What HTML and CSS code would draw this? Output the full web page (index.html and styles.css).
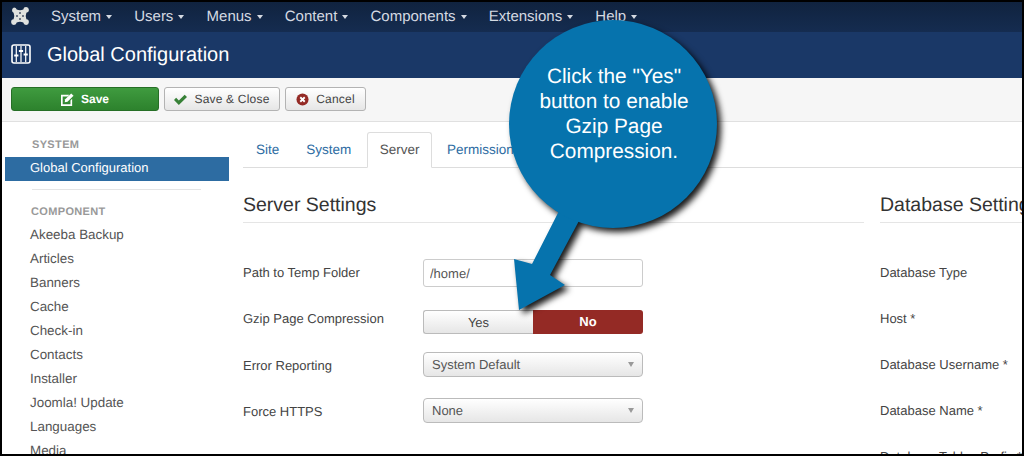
FILE: index.html
```html
<!DOCTYPE html>
<html lang="en">
<head>
<meta charset="utf-8">
<title>Global Configuration</title>
<link rel="stylesheet" href="styles.css">
</head>
<body>
<div class="frame">
  <nav class="navbar">
    <svg class="logo" viewBox="0 0 18 18"><path d="M3 .5a2.800 2.800 0 0 1 2.700 2.100Q9 4 12.300 2.600A2.800 2.800 0 1 1 15.400 5.700Q14 9 15.400 12.300A2.800 2.800 0 1 1 12.300 15.400Q9 14 5.700 15.400A2.800 2.800 0 1 1 2.600 12.300Q4 9 2.600 5.700A2.800 2.800 0 0 1 3 .5z" fill="#dfe1de"/><g fill="#4a5568"><circle cx="9" cy="6" r="1"/><circle cx="6" cy="9" r="1"/><circle cx="12" cy="9" r="1"/><circle cx="9" cy="12" r="1"/></g></svg>
    <ul class="menu">
      <li>System<i class="caret"></i></li>
      <li>Users<i class="caret"></i></li>
      <li>Menus<i class="caret"></i></li>
      <li>Content<i class="caret"></i></li>
      <li>Components<i class="caret"></i></li>
      <li>Extensions<i class="caret"></i></li>
      <li>Help<i class="caret"></i></li>
    </ul>
  </nav>
  <header class="titlebar">
    <svg class="title-icon" viewBox="0 0 20 20"><rect x="1" y="1" width="18" height="18" rx="2" fill="none" stroke="#fff" stroke-width="1.600"/><path d="M5.300 2v16M10 2v16M14.700 2v16" stroke="#fff" stroke-width="1.200"/><path d="M3.200 11.500h4.200M7.900 7h4.200M12.600 10.500h4.200" stroke="#fff" stroke-width="2.200"/></svg>
    <h1>Global Configuration</h1>
  </header>
  <div class="toolbar">
    <button class="btn btn-save"><svg viewBox="0 0 14 14"><path d="M0 2h9L7.200 3.800H1.800v8.400h8.400V8L12 6.200V14H0z" fill="#fff"/><path d="M4.500 6.800L11 .5 13.500 3 7 9.500l-3 .5z" fill="#fff"/></svg>Save</button>
    <button class="btn btn-close"><svg viewBox="0 0 14 14"><path d="M0 7.500l2.300-2.300 2.900 2.900L11.500 1.800 14 4.200 5.200 13z" fill="#378137"/></svg>Save &amp; Close</button>
    <button class="btn btn-cancel"><svg viewBox="0 0 14 14"><circle cx="7" cy="7" r="6.500" fill="#942a25"/><path d="M4.600 4.600l4.800 4.800M9.400 4.600l-4.800 4.800" stroke="#fff" stroke-width="2"/></svg>Cancel</button>
  </div>
  <div class="main">
    <aside class="sidebar">
      <div class="nav-head nav-head-first">SYSTEM</div>
      <div class="nav-active">Global Configuration</div>
      <div class="divider"></div>
      <div class="nav-head">COMPONENT</div>
      <a class="nav-item">Akeeba Backup</a>
      <a class="nav-item">Articles</a>
      <a class="nav-item">Banners</a>
      <a class="nav-item">Cache</a>
      <a class="nav-item">Check-in</a>
      <a class="nav-item">Contacts</a>
      <a class="nav-item">Installer</a>
      <a class="nav-item">Joomla! Update</a>
      <a class="nav-item">Languages</a>
      <a class="nav-item">Media</a>
    </aside>
    <section class="content">
      <div class="tabs">
        <a class="tab tab-site">Site</a>
        <a class="tab">System</a>
        <a class="tab tab-active">Server</a>
        <a class="tab">Permissions</a>
      </div>
      <div class="columns">
        <div class="col col-left">
          <h2>Server Settings</h2>
          <div class="row row-input"><label>Path to Temp Folder</label><input class="input" value="/home/"></div>
          <div class="row row-toggle"><label>Gzip Page Compression</label>
            <div class="toggle"><span class="yes">Yes</span><span class="no">No</span></div></div>
          <div class="row row-select"><label>Error Reporting</label><div class="select">System Default<i class="arrow"></i></div></div>
          <div class="row row-select"><label>Force HTTPS</label><div class="select">None<i class="arrow"></i></div></div>
        </div>
        <div class="col col-right">
          <h2>Database Settings</h2>
          <div class="row row-input"><label>Database Type</label></div>
          <div class="row row-toggle"><label>Host *</label></div>
          <div class="row row-select"><label>Database Username *</label></div>
          <div class="row row-select"><label>Database Name *</label></div>
          <div class="row row-select"><label>Database Tables Prefix *</label></div>
        </div>
      </div>
    </section>
  </div>
  <div class="callout">
    <svg class="callout-shape" viewBox="0 0 240 320"><path d="M52 190L24 245L6 240L11 291L57 266L42 256L72 200z" fill="#0673ad"/><circle cx="105" cy="105" r="104" fill="#0673ad"/></svg>
    <p>Click the "Yes" button to enable Gzip Page Compression.</p>
  </div>
</div>
</body>
</html>
```
FILE: styles.css
```css
* { box-sizing: border-box; }
html, body { margin: 0; height: 456px; overflow: hidden; background: #000; }
body { font-family: "Liberation Sans", Arial, sans-serif; color: #444; text-rendering: geometricPrecision; }
.frame { position: relative; width: 1024px; height: 456px; border: 2px solid #000; background: #fff; overflow: hidden; }
.navbar { display: flex; align-items: center; height: 30px; padding: 0 0 2px 9px; background: linear-gradient(#10233f, #152c50); }
.logo { width: 18px; height: 18px; flex: none; margin-top: -1px; }
.menu { display: flex; list-style: none; margin: 0 0 0 22px; padding: 0; color: #d5dae2; font-size: 15px; }
.menu li { margin-right: 22.200px; display: flex; align-items: center; }
.caret { width: 0; height: 0; margin: 2px 0 0 5px; border: 3.500px solid transparent; border-top: 4px solid #d5dae2; border-bottom: 0; }
.titlebar { display: flex; align-items: center; height: 46px; padding-left: 9px; background: #1a3867; color: #fff; }
.title-icon { width: 20px; height: 20px; margin-top: -2px; flex: none; }
h1 { margin: 0 0 0 16px; font-size: 20px; font-weight: 400; }
.toolbar { display: flex; gap: 5px; height: 44px; padding: 9px; background: #f6f6f6; border-bottom: 1px solid #e0e0e0; }
.btn { display: flex; align-items: center; justify-content: center; height: 24px; padding: 0; font: 12px "Liberation Sans", Arial, sans-serif; letter-spacing: .2px; border-radius: 3px; color: #444; border: 1px solid #b3b3b3; background: linear-gradient(#fff, #e6e6e6); text-rendering: geometricPrecision; }
.btn svg { width: 13px; height: 13px; margin-right: 7px; flex: none; }
.btn-save { width: 148px; background: linear-gradient(#3f9b3f, #2d822d); border-color: #266f26; color: #fff; font-weight: 700; letter-spacing: 0; }
.btn-close { width: 116px; }
.btn-cancel { width: 81px; }
.main { display: flex; height: 332px; overflow: hidden; }
.sidebar { flex: none; width: 227px; padding: 3px 0 0 3px; font-size: 13px; color: #555; }
.nav-head { height: 26px; padding-left: 26px; font-size: 11px; line-height: 26px; font-weight: 700; color: #999; letter-spacing: .35px; }
.nav-head-first { height: 32px; padding-left: 27px; line-height: 40px; }
.nav-active { width: 224px; height: 24px; margin-bottom: 8px; padding-left: 25px; background: #2d6ca2; color: #fff; line-height: 22px; font-size: 13px; }
.divider { width: 169px; height: 1px; margin: 0 0 9px 27px; background: #e5e5e5; }
.nav-item { display: block; height: 24px; padding-left: 25px; line-height: 20px; font-size: 13.400px; }
.content { flex: none; width: 793px; padding: 10px 0 0 14px; overflow: hidden; }
.tabs { display: flex; height: 36px; border-bottom: 1px solid #ddd; font-size: 13.500px; color: #2d6ca2; }
.tab { height: 36px; line-height: 36px; padding: 0 13px; }
.tab-site { padding-right: 14px; }
.tab-active { margin: 0 2px 0 3px; color: #555; background: #fff; border: 1px solid #ddd; border-bottom-color: #fff; border-radius: 3px 3px 0 0; padding: 0 11.500px; line-height: 34px; }
.columns { display: flex; gap: 16px; width: 900px; }
.col-left { flex: none; width: 621px; }
.col-right { flex: none; width: 300px; }
h2 { margin: 0; height: 55px; padding-top: 25px; font-size: 19.500px; line-height: 24px; font-weight: 400; color: #333; border-bottom: 1px solid #e5e5e5; }
.row { display: flex; font-size: 13px; color: #444; }
.row label { flex: none; width: 180px; font-size: 13px; }
.row-input { margin-top: 36px; height: 51px; }
.row-input label { line-height: 28px; }
.row-toggle { height: 42px; }
.row-toggle label { line-height: 18px; }
.row-select { height: 46px; }
.row-select label { line-height: 27px; }
.col-right .row-select label { line-height: 25px; }
.input { width: 220px; height: 28px; padding: 0 6px; border: 1px solid #ccc; border-radius: 3px; font: 13px "Liberation Sans", Arial, sans-serif; color: #555; background: #fff; text-rendering: geometricPrecision; }
.toggle { display: flex; width: 220px; height: 24px; font-size: 13px; }
.yes { width: 110px; line-height: 24px; text-align: center; border: 1px solid #bbb; border-right: 0; border-radius: 3px 0 0 3px; background: linear-gradient(#fff, #e6e6e6); color: #444; }
.no { width: 110px; line-height: 24px; text-align: center; border-radius: 0 3px 3px 0; background: #942a25; color: #fff; font-weight: 700; }
.select { position: relative; width: 220px; height: 25px; padding-left: 8px; line-height: 23px; border: 1px solid #bbb; border-radius: 4px; background: linear-gradient(#fff, #e6e6e6); color: #555; font-size: 13px; }
.arrow { position: absolute; right: 8px; top: 9px; width: 0; height: 0; border: 3.500px solid transparent; border-top: 5px solid #999; border-bottom: 0; }
.callout { position: absolute; left: 506px; top: 17px; width: 240px; height: 320px; }
.callout-shape { position: absolute; inset: 0; width: 240px; height: 320px; overflow: visible; filter: drop-shadow(4px 4px 3px rgba(0,0,0,.9)); }
.callout p { position: relative; width: 190px; margin: 0 0 0 11px; padding-top: 45px; text-align: center; color: #fff; font-size: 20.800px; line-height: 25px; }
```
